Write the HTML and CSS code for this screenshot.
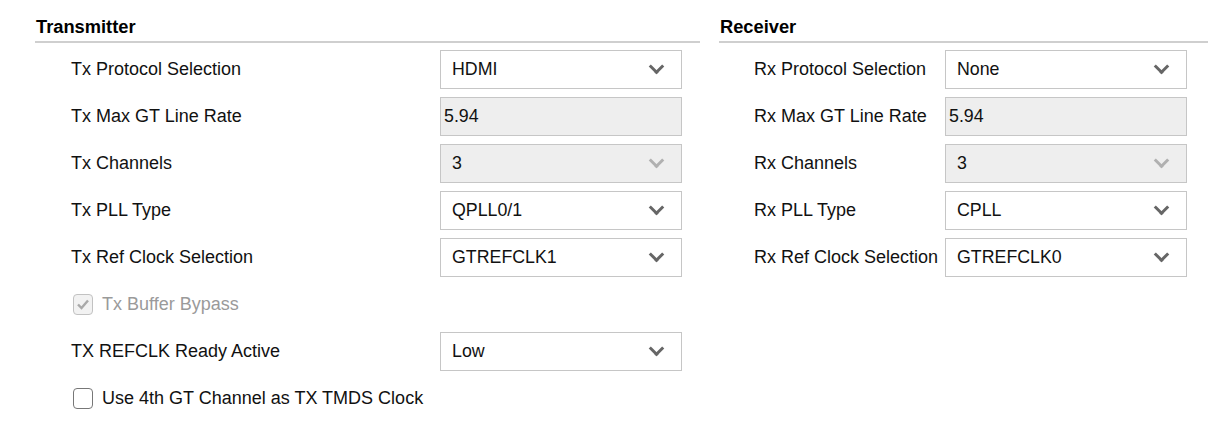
FILE: index.html
```html
<!DOCTYPE html>
<html>
<head>
<meta charset="utf-8">
<link rel="stylesheet" href="styles.css">
</head>
<body>
<div class="page">
  <section class="panel panel-tx">
    <h2 class="panel-title">Transmitter</h2>
    <div class="rows rows-tx">
      <div class="row"><span class="label">Tx Protocol Selection</span><div class="select"><span>HDMI</span><i class="chev"></i></div></div>
      <div class="row"><span class="label">Tx Max GT Line Rate</span><div class="field readonly"><span>5.94</span></div></div>
      <div class="row"><span class="label">Tx Channels</span><div class="select disabled"><span>3</span><i class="chev"></i></div></div>
      <div class="row"><span class="label">Tx PLL Type</span><div class="select"><span>QPLL0/1</span><i class="chev"></i></div></div>
      <div class="row"><span class="label">Tx Ref Clock Selection</span><div class="select"><span>GTREFCLK1</span><i class="chev"></i></div></div>
      <div class="row check-row disabled-text"><span class="box checked"><svg width="14" height="12" viewBox="0 0 14 12"><path d="M2 6.5 L5.5 10 L12 2.5" fill="none" stroke="#a9a9a9" stroke-width="2.4"/></svg></span><span class="check-label">Tx Buffer Bypass</span></div>
      <div class="row"><span class="label">TX REFCLK Ready Active</span><div class="select"><span>Low</span><i class="chev"></i></div></div>
      <div class="row check-row"><span class="box"></span><span class="check-label">Use 4th GT Channel as TX TMDS Clock</span></div>
    </div>
  </section>
  <section class="panel panel-rx">
    <h2 class="panel-title">Receiver</h2>
    <div class="rows rows-rx">
      <div class="row"><span class="label">Rx Protocol Selection</span><div class="select"><span>None</span><i class="chev"></i></div></div>
      <div class="row"><span class="label">Rx Max GT Line Rate</span><div class="field readonly"><span>5.94</span></div></div>
      <div class="row"><span class="label">Rx Channels</span><div class="select disabled"><span>3</span><i class="chev"></i></div></div>
      <div class="row"><span class="label">Rx PLL Type</span><div class="select"><span>CPLL</span><i class="chev"></i></div></div>
      <div class="row"><span class="label">Rx Ref Clock Selection</span><div class="select"><span>GTREFCLK0</span><i class="chev"></i></div></div>
    </div>
  </section>
</div>
</body>
</html>
```

FILE: styles.css
```css
html, body {
  margin: 0;
  padding: 0;
  background: #ffffff;
}
body {
  font-family: "Liberation Sans", Arial, sans-serif;
  color: #111;
}
.page {
  display: flex;
  gap: 19px;
  padding: 15px 0 0 35px;
}
.panel-tx { width: 665px; }
.panel-rx { width: 489px; }
.panel-title {
  margin: 0;
  font-size: 18.3px;
  line-height: 24px;
  font-weight: bold;
  padding: 0 0 2px 1px;
  border-bottom: 2px solid #cfcfcf;
  color: #000;
}
.rows {
  display: flex;
  flex-direction: column;
  gap: 9px;
  margin-top: 7px;
}
.rows-tx { padding-left: 36px; }
.rows-rx { padding-left: 35px; }
.row {
  display: flex;
  align-items: center;
  height: 38px;
  font-size: 18px;
}
.rows-tx .label { width: 369px; }
.rows-rx .label { width: 191px; }
.label { white-space: nowrap; }
.select, .field {
  box-sizing: border-box;
  width: 242px;
  height: 39px;
  border: 1px solid #c6c6c6;
  background: #fff;
  display: flex;
  align-items: center;
  padding: 0 17px 0 11px;
  font-size: 17.8px;
}
.select span, .field span { flex: 1; }
.field.readonly {
  background: #eeeeee;
  padding-left: 3px;
}
.select.disabled { background: #eeeeee; }
.chev {
  width: 8px;
  height: 8px;
  border-right: 3px solid #666;
  border-bottom: 3px solid #666;
  transform: rotate(45deg);
  margin-top: -5px;
  margin-right: 2px;
}
.select.disabled .chev { border-color: #b0b0b0; }
.check-row { padding-left: 2px; }
.box {
  box-sizing: border-box;
  width: 20px;
  height: 21px;
  border: 1.5px solid #777;
  border-radius: 4px;
  background: #fff;
  margin-right: 9px;
  display: flex;
  align-items: center;
  justify-content: center;
}
.box.checked {
  border-color: #c2c2c2;
  background: #f2f2f2;
}
.disabled-text { color: #9a9a9a; }
```
